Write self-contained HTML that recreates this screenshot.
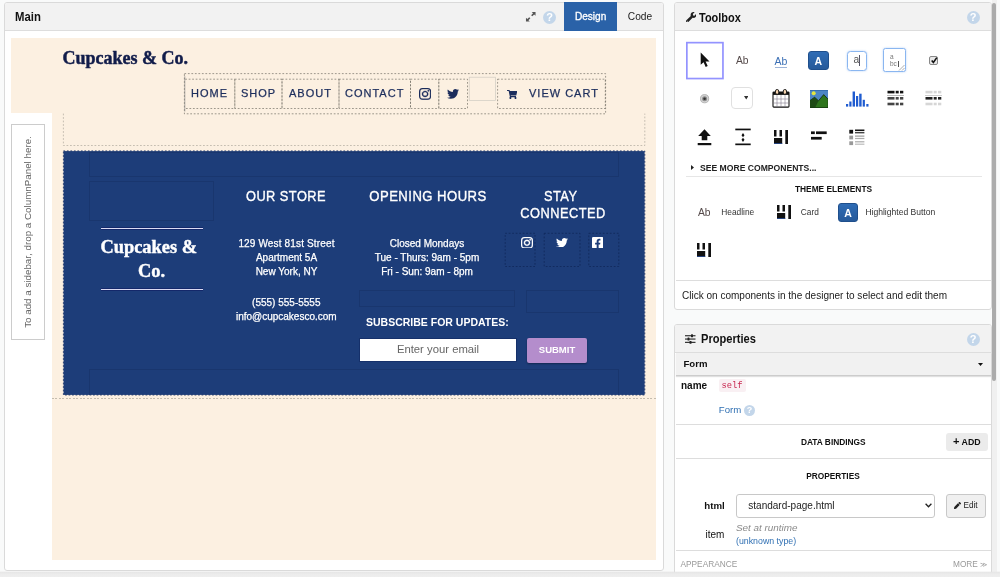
<!DOCTYPE html>
<html><head><meta charset="utf-8">
<style>
*{box-sizing:border-box;margin:0;padding:0}
html,body{width:1000px;height:577px;overflow:hidden}
body{background:#f9fafa;font-family:"Liberation Sans",sans-serif;color:#222;position:relative;font-size:10px}
.abs{position:absolute}
.panel{position:absolute;background:#fff;border:1px solid #dadada;border-radius:3px;overflow:hidden}
.phead{position:absolute;left:0;top:0;right:0;height:28px;background:#f2f2f2;border-bottom:1px solid #ddd}
.ptitle{position:absolute;transform-origin:0 50%;font-weight:bold;font-size:12px;color:#111;line-height:14px;white-space:nowrap}
.help{position:absolute;width:13px;height:13px;border-radius:50%;background:#c3d6ea;color:#fff;font-weight:bold;font-size:11px;line-height:13px;text-align:center}
.t{position:absolute;white-space:nowrap;line-height:1}
.dash{position:absolute;border:1px dashed #8a8378}
.ibox{position:absolute;border:1px solid #19366e}
.w{color:#fff}
.ctr{text-align:center}

.nt{top:86.4px;font-size:11px;color:#1c2d5c;letter-spacing:1px;line-height:14px;-webkit-text-stroke:0.25px #1c2d5c}
.hd{font-size:14px;letter-spacing:0.5px;transform:translateX(-50%) scaleX(.915);line-height:17.5px;top:187.8px !important;-webkit-text-stroke:0.35px #fff}
.bd{font-size:10px;line-height:14px;transform:translateX(-50%);-webkit-text-stroke:0.25px #fff}

.btnA{background:linear-gradient(#2f6cb5,#265a9a);border:1px solid #1f4f8c;border-radius:3px;color:#fff;font-weight:bold;font-size:10.5px;text-align:center;line-height:18.5px}
</style></head><body><div id="wrap" style="position:absolute;left:0;top:0;width:1000px;height:577px;will-change:transform;overflow:hidden">

<!-- MAIN PANEL -->
<div class="panel" id="main" style="left:4px;top:2px;width:660px;height:569px">
  <div class="phead"></div>
  <div class="ptitle" style="left:9.6px;top:7.3px;transform:scaleX(.945)">Main</div>
</div>


<!-- MAIN header controls -->
<svg class="abs" style="left:525.3px;top:11.2px" width="11.5" height="11.5" viewBox="0 0 12 12"><g fill="#555"><path d="M7 1h4v4l-1.4-1.4-2 2-1.2-1.2 2-2z"/><path d="M5 11H1V7l1.4 1.4 2-2 1.2 1.2-2 2z"/></g></svg>
<div class="help" style="left:543.1px;top:10.6px">?</div>
<div class="abs" style="left:564px;top:2px;width:53.2px;height:29px;background:#2a62a8;color:#fff;font-size:10.1px;font-weight:normal;text-align:center;line-height:30px;-webkit-text-stroke:0.3px #fff">Design</div>
<div class="abs" style="left:617.5px;top:3px;width:45px;height:27px;color:#222;font-size:10.2px;text-align:center;line-height:28px">Code</div>

<!-- design surface -->
<div class="abs" style="left:11px;top:38px;width:645px;height:75px;background:#fcf0e1"></div>
<div class="abs" style="left:52px;top:113px;width:604px;height:447px;background:#fcf0e1"></div>
<div class="abs" style="left:11px;top:124px;width:34px;height:216px;border:1px solid #ccc;background:#fff"></div>
<div class="t" id="sidetxt" style="left:28px;top:232px;font-size:9.8px;color:#666;transform:translate(-50%,-50%) rotate(-90deg)">To add a sidebar, drop a ColumnPanel here.</div>

<div class="t" id="title1" style="left:62.5px;top:48px;font-family:'Liberation Serif',serif;font-weight:bold;font-size:18px;color:#111c4a;line-height:20px;-webkit-text-stroke:0.45px #111c4a">Cupcakes &amp; Co.</div>

<!-- nav -->
<svg class="abs" style="left:180px;top:70px" width="430" height="48" viewBox="0 0 430 48"><g fill="none" stroke="#6b675f" stroke-width="0.65" stroke-dasharray="1.75 1.75"><rect x="4.40" y="3.60" width="421.20" height="40.20" /><path d="M5.2 9.2H54.80V38.50H5.2"/><rect x="54.80" y="9.20" width="47.20" height="29.30" /><rect x="102.00" y="9.20" width="57.00" height="29.30" /><rect x="159.00" y="9.20" width="71.50" height="29.30" /><rect x="230.50" y="9.20" width="28.30" height="29.30" /><rect x="258.80" y="9.20" width="28.70" height="29.30" /><rect x="317.60" y="9.20" width="107.70" height="29.30" /></g><path d="M4.80 6.20V41.50" stroke="#777" stroke-width="0.6" fill="none"/><rect x="289.20" y="7.20" width="26.3" height="23.4" fill="none" stroke="#cfcac2" stroke-width="0.7"/></svg>
<div class="t nt" id="n1" style="left:191px">HOME</div>
<div class="t nt" id="n2" style="left:241px">SHOP</div>
<div class="t nt" id="n3" style="left:289px">ABOUT</div>
<div class="t nt" id="n4" style="left:345px">CONTACT</div>
<div class="t nt" id="n5" style="left:529px">VIEW CART</div>

<!-- dashed slot -->
<svg class="abs" style="left:60px;top:110px" width="590" height="292" viewBox="0 0 590 292">
<path d="M3.4 3.6V35.5H584.8V3.6" fill="none" stroke="#a8a297" stroke-width="0.65" stroke-dasharray="1.75 1.75"/>
<rect x="3.6" y="41.1" width="581" height="243.8" fill="#1d3d79"/>
<rect x="3.4" y="40.9" width="581.4" height="244.1" fill="none" stroke="#0d2660" stroke-width="0.8" stroke-dasharray="1.75 1.75"/>
</svg>
<div class="abs" style="left:52px;top:398px;width:604px;height:1px;background:repeating-linear-gradient(90deg,#c4bcae 0,#c4bcae 1.75px,transparent 1.75px,transparent 3.5px)"></div>
<div class="ibox" style="left:89px;top:152px;width:530px;height:25px"></div>
<div class="ibox" style="left:89px;top:181px;width:125px;height:40px"></div>
<div class="ibox" style="left:89px;top:369px;width:530px;height:26px;border-bottom:none"></div>
<div class="ibox" style="left:359px;top:290px;width:156px;height:17px"></div>
<div class="ibox" style="left:526px;top:290px;width:93px;height:23px"></div>

<div class="abs" style="left:100.7px;top:227.4px;width:102px;height:3px;background:linear-gradient(#14286a 0,#14286a 0.5px,#dadaf2 0.6px,#dadaf2 2.4px,#14286a 2.5px,#14286a 3px)"></div>
<div class="abs" style="left:100.7px;top:287.5px;width:102px;height:3px;background:linear-gradient(#14286a 0,#14286a 0.5px,#dadaf2 0.6px,#dadaf2 2.4px,#14286a 2.5px,#14286a 3px)"></div>
<div class="t w ctr" id="title2" style="left:89px;width:125px;top:235px;font-family:'Liberation Serif',serif;font-weight:bold;font-size:18.4px;line-height:24px;white-space:normal;-webkit-text-stroke:0.4px #fff"><span style="position:relative;left:-2.8px">Cupcakes &amp;</span><br>Co.</div>

<div class="t w hd" id="h1" style="left:286.2px">OUR STORE</div>
<div class="t w hd" id="h2" style="left:428.2px;transform:translateX(-50%) scaleX(.936)">OPENING HOURS</div>
<div class="t w hd ctr" id="h3" style="left:563px"><span style="position:relative;left:-2.5px">STAY</span><br>CONNECTED</div>

<div class="t w bd ctr" id="b1" style="left:286.5px;top:236.9px"><span style="letter-spacing:0.15px">129 West 81st Street</span><br>Apartment 5A<br>New York, NY</div>
<div class="t w bd ctr" id="b2" style="left:286.3px;top:295.8px">(555) 555-5555<br>info@cupcakesco.com</div>
<div class="t w bd ctr" id="b3" style="left:427px;top:237.1px">Closed Mondays<br>Tue - Thurs: 9am - 5pm<br>Fri - Sun: 9am - 8pm</div>

<svg class="abs" style="left:500px;top:230px" width="125" height="40" viewBox="0 0 125 40"><g fill="none" stroke="#0e2454" stroke-width="0.7" stroke-dasharray="1.75 1.75"><rect x="5.2" y="3.3" width="29.8" height="33.2"/><rect x="44.2" y="3.3" width="35.8" height="33.2"/><rect x="88.8" y="3.3" width="30" height="33.2"/></g></svg>

<div class="t w" id="sub" style="left:366px;top:317px;font-size:10.5px;font-weight:bold;letter-spacing:0px">SUBSCRIBE FOR UPDATES:</div>
<div class="abs" style="left:359px;top:338px;width:158px;height:24px;background:#fff;border:1px solid #15306a"></div>
<div class="t" id="ph" style="left:438px;top:344px;font-size:11.3px;color:#666;transform:translateX(-50%)">Enter your email</div>
<div class="abs" style="left:527px;top:338px;width:60px;height:25px;background:#b48dcc;border-radius:2px;box-shadow:0 1px 2px rgba(0,0,0,.35)"></div>
<div class="t w" id="sbm" style="left:557px;top:345px;font-size:9.5px;font-weight:bold;transform:translateX(-50%)">SUBMIT</div>

<svg class="abs" style="left:418.7px;top:88.3px" width="12.2" height="11.8" viewBox="0 31 448 449" preserveAspectRatio="none"><path stroke="#1c2d5c" stroke-width="12" fill="#1c2d5c" d="M224.1 141c-63.6 0-114.9 51.3-114.9 114.9s51.3 114.9 114.9 114.9S339 319.5 339 255.9 287.7 141 224.1 141zm0 189.6c-41.1 0-74.7-33.5-74.7-74.7s33.5-74.7 74.7-74.7 74.7 33.5 74.7 74.7-33.6 74.7-74.7 74.7zm146.4-194.3c0 14.9-12 26.8-26.8 26.8-14.9 0-26.8-12-26.8-26.8s12-26.8 26.8-26.8 26.8 12 26.8 26.8zm76.1 27.2c-1.7-35.9-9.9-67.7-36.2-93.9-26.2-26.2-58-34.4-93.9-36.2-37-2.1-147.9-2.1-184.9 0-35.8 1.7-67.6 9.9-93.9 36.1s-34.4 58-36.2 93.9c-2.1 37-2.1 147.9 0 184.9 1.7 35.9 9.9 67.7 36.2 93.9s58 34.4 93.9 36.2c37 2.1 147.9 2.1 184.9 0 35.9-1.7 67.7-9.9 93.9-36.2 26.2-26.2 34.4-58 36.2-93.9 2.1-37 2.1-147.8 0-184.8zM398.8 388c-7.8 19.6-22.9 34.7-42.6 42.6-29.5 11.7-99.5 9-132.1 9s-102.7 2.6-132.1-9c-19.6-7.8-34.7-22.9-42.6-42.6-11.7-29.5-9-99.5-9-132.1s-2.6-102.7 9-132.1c7.8-19.6 22.9-34.7 42.6-42.6 29.5-11.7 99.5-9 132.1-9s102.7-2.6 132.1 9c19.6 7.8 34.7 22.9 42.6 42.6 11.7 29.5 9 99.5 9 132.1s2.7 102.7-9 132.1z"/></svg>
<svg class="abs" style="left:447px;top:89px" width="12" height="9.8" viewBox="0 48 512 416" preserveAspectRatio="none"><path fill="#1c2d5c" d="M459.37 151.716c.325 4.548.325 9.097.325 13.645 0 138.72-105.583 298.558-298.558 298.558-59.452 0-114.68-17.219-161.137-47.106 8.447.974 16.568 1.299 25.34 1.299 49.055 0 94.213-16.568 130.274-44.832-46.132-.975-84.792-31.188-98.112-72.772 6.498.974 12.995 1.624 19.818 1.624 9.421 0 18.843-1.3 27.614-3.573-48.081-9.747-84.143-51.98-84.143-102.985v-1.299c13.969 7.797 30.214 12.67 47.431 13.319-28.264-18.843-46.781-51.005-46.781-87.391 0-19.492 5.197-37.36 14.294-52.954 51.655 63.675 129.3 105.258 216.365 109.807-1.624-7.797-2.599-15.918-2.599-24.04 0-57.828 46.782-104.934 104.934-104.934 30.213 0 57.502 12.67 76.67 33.137 23.715-4.548 46.456-13.32 66.599-25.34-7.798 24.366-24.366 44.833-46.132 57.827 21.117-2.273 41.584-8.122 60.426-16.243-14.292 20.791-32.161 39.308-52.628 54.253z"/></svg>
<svg class="abs" style="left:506.7px;top:90px" width="10.2" height="8.9" viewBox="0 0 576 512" preserveAspectRatio="none"><path fill="#1c2d5c" d="M528.12 301.319l47.273-208C578.806 78.301 567.391 64 551.99 64H159.208l-9.166-44.81C147.758 8.021 137.93 0 126.529 0H24C10.745 0 0 10.745 0 24v16c0 13.255 10.745 24 24 24h69.883l70.248 343.435C147.325 417.1 136 435.222 136 456c0 30.928 25.072 56 56 56s56-25.072 56-56c0-15.674-6.447-29.835-16.824-40h209.647C430.447 426.165 424 440.326 424 456c0 30.928 25.072 56 56 56s56-25.072 56-56c0-22.172-12.888-41.332-31.579-50.405l5.517-24.276c3.413-15.018-8.002-29.319-23.403-29.319H218.117l-6.545-32h293.145c11.206 0 20.92-7.754 23.403-18.681z"/></svg>
<svg class="abs" style="left:521.4px;top:236.8px" width="12" height="11.6" viewBox="0 31 448 449" preserveAspectRatio="none"><path stroke="#fff" stroke-width="14" fill="#fff" d="M224.1 141c-63.6 0-114.9 51.3-114.9 114.9s51.3 114.9 114.9 114.9S339 319.5 339 255.9 287.7 141 224.1 141zm0 189.6c-41.1 0-74.7-33.5-74.7-74.7s33.5-74.7 74.7-74.7 74.7 33.5 74.7 74.7-33.6 74.7-74.7 74.7zm146.4-194.3c0 14.9-12 26.8-26.8 26.8-14.9 0-26.8-12-26.8-26.8s12-26.8 26.8-26.8 26.8 12 26.8 26.8zm76.1 27.2c-1.7-35.9-9.9-67.7-36.2-93.9-26.2-26.2-58-34.4-93.9-36.2-37-2.1-147.9-2.1-184.9 0-35.8 1.7-67.6 9.9-93.9 36.1s-34.4 58-36.2 93.9c-2.1 37-2.1 147.9 0 184.9 1.7 35.9 9.9 67.7 36.2 93.9s58 34.4 93.9 36.2c37 2.1 147.9 2.1 184.9 0 35.9-1.7 67.7-9.9 93.9-36.2 26.2-26.2 34.4-58 36.2-93.9 2.1-37 2.1-147.8 0-184.8zM398.8 388c-7.8 19.6-22.9 34.7-42.6 42.6-29.5 11.7-99.5 9-132.1 9s-102.7 2.6-132.1-9c-19.6-7.8-34.7-22.9-42.6-42.6-11.7-29.5-9-99.5-9-132.1s-2.6-102.7 9-132.1c7.8-19.6 22.9-34.7 42.6-42.6 29.5-11.7 99.5-9 132.1-9s102.7-2.6 132.1 9c19.6 7.8 34.7 22.9 42.6 42.6 11.7 29.5 9 99.5 9 132.1s2.7 102.7-9 132.1z"/></svg>
<svg class="abs" style="left:556px;top:237.6px" width="12" height="9.8" viewBox="0 48 512 416" preserveAspectRatio="none"><path fill="#fff" d="M459.37 151.716c.325 4.548.325 9.097.325 13.645 0 138.72-105.583 298.558-298.558 298.558-59.452 0-114.68-17.219-161.137-47.106 8.447.974 16.568 1.299 25.34 1.299 49.055 0 94.213-16.568 130.274-44.832-46.132-.975-84.792-31.188-98.112-72.772 6.498.974 12.995 1.624 19.818 1.624 9.421 0 18.843-1.3 27.614-3.573-48.081-9.747-84.143-51.98-84.143-102.985v-1.299c13.969 7.797 30.214 12.67 47.431 13.319-28.264-18.843-46.781-51.005-46.781-87.391 0-19.492 5.197-37.36 14.294-52.954 51.655 63.675 129.3 105.258 216.365 109.807-1.624-7.797-2.599-15.918-2.599-24.04 0-57.828 46.782-104.934 104.934-104.934 30.213 0 57.502 12.67 76.67 33.137 23.715-4.548 46.456-13.32 66.599-25.34-7.798 24.366-24.366 44.833-46.132 57.827 21.117-2.273 41.584-8.122 60.426-16.243-14.292 20.791-32.161 39.308-52.628 54.253z"/></svg>
<svg class="abs" style="left:591.7px;top:237px" width="11.3" height="11.3" viewBox="0 32 448 448" preserveAspectRatio="none"><path fill="#fff" d="M400 32H48A48 48 0 0 0 0 80v352a48 48 0 0 0 48 48h137.25V327.69h-63V256h63v-54.64c0-62.15 37-96.48 93.67-96.48 27.14 0 55.52 4.84 55.52 4.84v61h-31.27c-30.81 0-40.42 19.12-40.42 38.73V256h68.78l-11 71.69h-57.78V480H400a48 48 0 0 0 48-48V80a48 48 0 0 0-48-48z"/></svg>
<!-- RIGHT: TOOLBOX -->
<div class="panel" id="toolbox" style="left:674.4px;top:2px;width:317.4px;height:308px">
  <div class="phead"></div>
  <div class="ptitle" style="left:23.5px;top:7.5px;transform:scaleX(.913)">Toolbox</div>
</div>


<svg class="abs" style="left:685.5px;top:11.5px" width="10.5" height="10.5" viewBox="0 0 512 512"><path fill="#222" d="M507.73 109.1c-2.24-9.03-13.54-12.09-20.12-5.51l-74.36 74.36-67.88-11.31-11.31-67.88 74.36-74.36c6.62-6.62 3.43-17.9-5.66-20.16-47.38-11.74-99.55.91-136.58 37.93-39.64 39.64-50.55 97.1-34.05 147.2L18.74 402.76c-24.99 24.99-24.99 65.51 0 90.5 24.99 24.99 65.51 24.99 90.5 0l213.21-213.21c50.12 16.71 107.47 5.68 147.37-34.22 37.07-37.07 49.7-89.32 37.91-136.73zM64 472c-13.25 0-24-10.75-24-24 0-13.26 10.75-24 24-24s24 10.74 24 24c0 13.25-10.75 24-24 24z"/></svg>
<div class="help" style="left:966.5px;top:10.5px">?</div>

<!-- row 1 -->
<svg class="abs" style="left:685px;top:41px" width="40" height="40" viewBox="0 0 40 40"><rect x="1.85" y="1.65" width="36.1" height="35.9" fill="#fff" stroke="#9393ff" stroke-width="1.7"/></svg>
<svg class="abs" style="left:700px;top:52px" width="11" height="16" viewBox="0 0 11 16"><path fill="#111" d="M0.7 0.5 L0.7 12.8 L3.6 10.2 L5.7 15 L7.7 14.1 L5.6 9.4 L9.5 9.4 Z"/></svg>
<div class="t" style="left:736px;top:55.5px;font-size:10.3px;color:#554a4a">Ab</div>
<div class="t" style="left:774.5px;top:55.5px;font-size:10.5px;color:#3b6fb5;border-bottom:1px solid #9db4d8;padding-bottom:0.5px">Ab</div>
<div class="abs btnA" style="left:808px;top:50.5px;width:20.5px;height:19.5px">A</div>
<div class="abs" style="left:847px;top:50.5px;width:19.5px;height:20px;border:1px solid #8ab6f0;border-radius:3.5px;background:#fff;box-shadow:0 0 2px rgba(120,170,240,.6)"></div>
<div class="t" style="left:853.5px;top:54.6px;font-size:10.2px;color:#555">a</div>
<div class="abs" style="left:859.2px;top:54.6px;width:0.9px;height:11px;background:#556"></div>
<div class="abs" style="left:883.3px;top:48px;width:22.7px;height:24px;border:1px solid #8ab6f0;border-radius:2.5px;background:#fff;box-shadow:0 0 2px rgba(120,170,240,.6)"></div>
<div class="t" style="left:890px;top:52.5px;font-size:6.5px;color:#777;line-height:7.5px;white-space:pre">a
bc</div>
<div class="abs" style="left:897.5px;top:61px;width:1px;height:6px;background:#555"></div>
<svg class="abs" style="left:898px;top:64px" width="7" height="7" viewBox="0 0 7 7"><path d="M6.5 1 L1 6.5 M6.5 4 L4 6.5" stroke="#999" stroke-width="0.8" fill="none"/></svg>
<div class="abs" style="left:929px;top:55.5px;width:8.5px;height:9px;border:1px solid #888;border-radius:2px;background:#e8e8e8"></div>
<svg class="abs" style="left:929.5px;top:54.5px" width="9" height="10" viewBox="0 0 9 10"><path d="M1.7 5.4 L3.4 7.4 L6.8 2.6" stroke="#111" stroke-width="1.6" fill="none"/></svg>

<!-- row 2 -->
<svg class="abs" style="left:699px;top:93px" width="12" height="12" viewBox="0 0 12 12"><circle cx="5.6" cy="5.7" r="4.1" fill="#d4d4d4" stroke="#a8a8a8" stroke-width="0.8"/><circle cx="5.6" cy="5.7" r="2.5" fill="#8c8c8c"/><circle cx="5.6" cy="5.7" r="1.3" fill="#333"/></svg>
<div class="abs" style="left:731.2px;top:86.6px;width:21.6px;height:22.6px;border:1px solid #e0e0e0;border-radius:4px;background:#fff"></div>
<svg class="abs" style="left:743.9px;top:96.2px" width="4.5" height="3.6" viewBox="0 0 5 4"><path d="M0 0H5L2.5 4z" fill="#333"/></svg>
<!-- calendar -->
<svg class="abs" style="left:771.5px;top:88.5px" width="18" height="19" viewBox="0 0 18 19">
<rect x="1" y="3" width="16" height="15.1" rx="0.8" fill="#fff" stroke="#111" stroke-width="1.1"/>
<rect x="1" y="3" width="16" height="2.9" fill="#111"/>
<path d="M1.3 10H16.7M1.3 14H16.7M5 6V18M9 6V18M13 6V18" stroke="#7a7486" stroke-width="0.55" fill="none"/>
<rect x="3.5" y="0.5" width="3.2" height="4.8" rx="1.5" fill="#f4d2ae" stroke="#111" stroke-width="0.9"/>
<rect x="11.3" y="0.5" width="3.2" height="4.8" rx="1.5" fill="#f4d2ae" stroke="#111" stroke-width="0.9"/>
</svg>
<!-- image -->
<svg class="abs" style="left:809.7px;top:89.7px" width="18.2" height="18.2" viewBox="0 0 18.200 18.2">
<rect width="18.2" height="18.2" fill="#4d86c4"/>
<rect width="18.2" height="0.7" fill="#2d66a8"/>
<circle cx="3.7" cy="3.3" r="2" fill="#e4e640"/>
<path d="M0 18.2V10.5L4.600 7.3L8.500 10.8L13.700 4.6L18.200 9.3V18.2z" fill="#2e741c" stroke="#0c1a08" stroke-width="0.7"/>
<path d="M0 18.2V10.5L4.600 7.3L8.500 10.8L5 18.2z" fill="#1e4a14"/>
<rect y="17.3" width="18.2" height="0.9" fill="#163a10"/>
</svg>
<!-- plot -->
<svg class="abs" style="left:845.5px;top:90.5px" width="23" height="16" viewBox="0 0 23 16"><g fill="#1f5bd0">
<rect x="0" y="13" width="2.2" height="2.6"/><rect x="3.3" y="10.5" width="2.2" height="5.1"/><rect x="6.6" y="0.5" width="2.4" height="15.1"/><rect x="10" y="5" width="2.2" height="10.6"/><rect x="13.2" y="2.7" width="2.4" height="12.9"/><rect x="16.7" y="8.8" width="2.2" height="6.8"/><rect x="20.3" y="13" width="2.2" height="2.6"/></g></svg>
<!-- datagrid -->
<svg class="abs" style="left:886.5px;top:90.1px" width="17" height="16" viewBox="0 0 17 16">
<g fill="#111"><rect x="0.5" y="0.8" width="7" height="2.6"/><rect x="8.7" y="0.8" width="3" height="2.6"/><rect x="13" y="0.8" width="3.3" height="2.6"/></g>
<rect x="0" y="5" width="17" height="0.6" fill="#888"/>
<g fill="#444"><rect x="0.5" y="7" width="7" height="2.6"/><rect x="8.7" y="7" width="3" height="2.6"/><rect x="13" y="7" width="3.3" height="2.6"/>
<rect x="0.5" y="12.7" width="7" height="2.6"/><rect x="8.7" y="12.7" width="3" height="2.6"/><rect x="13" y="12.7" width="3.3" height="2.6"/></g></svg>
<!-- repeating -->
<svg class="abs" style="left:925px;top:90.1px" width="17" height="16" viewBox="0 0 17 16">
<g fill="#d6d6d6"><rect x="0.5" y="0.8" width="7" height="2.6"/><rect x="8.7" y="0.8" width="3" height="2.6"/><rect x="13" y="0.8" width="3.3" height="2.6"/>
<rect x="0.5" y="12.7" width="7" height="2.6"/><rect x="8.7" y="12.7" width="3" height="2.6"/><rect x="13" y="12.7" width="3.3" height="2.6"/></g>
<rect x="0" y="5" width="17" height="0.6" fill="#aaa"/>
<g fill="#222"><rect x="0.5" y="7" width="7" height="2.6"/><rect x="8.7" y="7" width="3" height="2.6"/><rect x="13" y="7" width="3.3" height="2.6"/></g></svg>

<!-- row 3 -->
<svg class="abs" style="left:697px;top:128.5px" width="15" height="17" viewBox="0 0 15 17"><path d="M7.5 0.3L13.8 7H10.3V11.2H4.7V7H1.2z" fill="#111"/><rect x="0.7" y="14" width="13.6" height="2.2" fill="#111"/></svg>
<svg class="abs" style="left:734.5px;top:127.5px" width="16" height="18" viewBox="0 0 16 18"><rect x="0.3" y="0.6" width="15.4" height="1.7" fill="#111"/><rect x="0.3" y="15.5" width="15.4" height="1.7" fill="#111"/><path d="M8 5L9.5 7.3L8 9.2L6.5 7.3zM8 9.8L9.5 11.7L8 14L6.5 11.7z" fill="#111"/></svg>
<svg class="abs cardic" style="left:773.5px;top:130px" width="14.5" height="14" viewBox="0 0 14.5 14"><g fill="#111"><rect x="0" y="0" width="2.5" height="6.5"/><rect x="5.5" y="0" width="2.5" height="6.5"/><rect x="0" y="8" width="8.2" height="6"/><rect x="11.3" y="0" width="2.7" height="14"/></g><rect x="0" y="13.2" width="8.2" height="0.8" fill="#2a4f9a"/></svg>
<svg class="abs" style="left:811px;top:131px" width="16" height="9.5" viewBox="0 0 16 9.5"><g fill="#111"><rect x="0" y="0.4" width="3.8" height="2.7"/><rect x="5" y="0.4" width="10.7" height="2.7"/><rect x="0" y="5.9" width="10.7" height="2.7"/></g></svg>
<svg class="abs" style="left:848.5px;top:128.5px" width="16" height="17" viewBox="0 0 16 17">
<rect x="0.3" y="0.8" width="3.8" height="3.8" fill="#111"/><rect x="6" y="0.5" width="9.4" height="1.5" fill="#111"/><rect x="6" y="2.9" width="9.4" height="1.5" fill="#444"/>
<rect x="0.3" y="6.6" width="3.8" height="3.8" fill="#999"/><rect x="6" y="6.5" width="9.4" height="1.2" fill="#999"/><rect x="6" y="8.9" width="9.4" height="1.2" fill="#aaa"/>
<rect x="0.3" y="12.3" width="3.8" height="3.8" fill="#999"/><rect x="6" y="12.2" width="9.4" height="1.2" fill="#aaa"/><rect x="6" y="14.6" width="9.4" height="1.2" fill="#bbb"/></svg>

<svg class="abs" style="left:690.5px;top:165px" width="3" height="5" viewBox="0 0 3 5"><path d="M0 0L3 2.5L0 5z" fill="#222"/></svg>
<div class="t" id="seemore" style="left:700px;top:163px;font-size:8.6px;font-weight:bold;color:#222;line-height:10px">SEE MORE COMPONENTS...</div>
<div class="abs" style="left:686px;top:176px;width:296px;height:1px;background:#e6e6e6"></div>
<div class="t" id="theme" style="left:833.5px;top:183.5px;font-size:8.4px;font-weight:bold;color:#111;transform:translateX(-50%);line-height:10px">THEME ELEMENTS</div>

<div class="t" style="left:698px;top:207px;font-size:10.3px;color:#554a4a;line-height:12px">Ab</div>
<div class="t" id="hl" style="left:721.3px;top:206.9px;font-size:8.35px;color:#333;line-height:11px">Headline</div>
<svg class="abs cardic" style="left:776.5px;top:205.3px" width="14.5" height="14" viewBox="0 0 14.5 14"><g fill="#111"><rect x="0" y="0" width="2.5" height="6.5"/><rect x="5.5" y="0" width="2.5" height="6.5"/><rect x="0" y="8" width="8.2" height="6"/><rect x="11.3" y="0" width="2.7" height="14"/></g><rect x="0" y="13.2" width="8.2" height="0.8" fill="#2a4f9a"/></svg>
<div class="t" id="cardt" style="left:800.8px;top:206.9px;font-size:8.3px;color:#333;line-height:11px">Card</div>
<div class="abs btnA" style="left:838px;top:202.5px;width:20px;height:19.5px">A</div>
<div class="t" id="hb" style="left:865.4px;top:206.9px;font-size:8.55px;color:#333;line-height:11px">Highlighted Button</div>
<svg class="abs cardic" style="left:697.3px;top:243px" width="14.5" height="14" viewBox="0 0 14.5 14"><g fill="#111"><rect x="0" y="0" width="2.5" height="6.5"/><rect x="5.5" y="0" width="2.5" height="6.5"/><rect x="0" y="8" width="8.2" height="6"/><rect x="11.3" y="0" width="2.7" height="14"/></g><rect x="0" y="13.2" width="8.2" height="0.8" fill="#2a4f9a"/></svg>

<div class="abs" style="left:676px;top:280px;width:315px;height:1px;background:#ddd"></div>
<div class="t" id="hint" style="left:682px;top:289.5px;font-size:10.03px;color:#222;line-height:12px">Click on components in the designer to select and edit them</div>
<!-- scrollbar -->
<div class="abs" style="left:991.8px;top:0;width:5.2px;height:572px;background:#f0f0f0"></div>
<div class="abs" style="left:992.2px;top:2.5px;width:3.6px;height:378.5px;background:#ababab;border-radius:2px"></div>

<!-- RIGHT: PROPERTIES -->
<div class="panel" id="props" style="left:674.4px;top:324px;width:317.4px;height:260px;border-bottom-left-radius:0;border-bottom-right-radius:0">
  <div class="phead"></div>
  <div class="ptitle" style="left:26px;top:6.8px;transform:scaleX(.925)">Properties</div>
</div>


<!-- properties -->
<svg class="abs" style="left:685px;top:334px" width="10.5" height="10" viewBox="0 0 10.5 10"><g fill="#222"><rect x="0" y="1.2" width="10.5" height="1.1"/><rect x="0" y="4.5" width="10.5" height="1.1"/><rect x="0" y="7.8" width="10.5" height="1.1"/><rect x="6" y="0.3" width="2" height="2.9" rx="0.5"/><rect x="2.5" y="3.6" width="2" height="2.9" rx="0.5"/><rect x="4.5" y="6.9" width="2" height="2.9" rx="0.5"/></g></svg>
<div class="help" style="left:966.5px;top:332.5px">?</div>
<div class="abs" style="left:676px;top:353px;width:315px;height:23px;background:#f1f1f1;border-bottom:1px solid #ccc;box-shadow:0 1px 1px rgba(0,0,0,.12)"></div>
<div class="t" id="formh" style="left:683.5px;top:357.5px;font-size:9.6px;font-weight:bold;color:#111;line-height:12px">Form</div>
<svg class="abs" style="left:978px;top:362.5px" width="5" height="3" viewBox="0 0 5 3"><path d="M0 0H5L2.5 3z" fill="#111"/></svg>
<div class="t" id="namel" style="left:681px;top:379.6px;font-size:10px;font-weight:bold;color:#111;line-height:12px">name</div>
<div class="abs" style="left:719px;top:379px;width:26.5px;height:13px;background:#f9f0f3;border-radius:2px"></div>
<div class="t" id="selft" style="left:721.5px;top:380.5px;font-family:'Liberation Mono',monospace;font-size:8.8px;color:#c7254e;line-height:11px">self</div>
<div class="t" id="forml" style="left:718.8px;top:403.9px;font-size:9.6px;color:#3070b3;line-height:12px">Form</div>
<div class="help" style="left:744px;top:405px;width:11px;height:11px;font-size:9px;line-height:11px">?</div>
<div class="abs" style="left:676px;top:424px;width:315px;height:1px;background:#ddd"></div>
<div class="t" id="databind" style="left:833.3px;top:436.8px;font-size:8.35px;font-weight:bold;color:#111;transform:translateX(-50%);line-height:10px">DATA BINDINGS</div>
<div class="abs" style="left:946px;top:433px;width:41.5px;height:18px;background:#ebebeb;border-radius:3px"></div>
<div class="t" id="addt" style="left:953px;top:437.0px;font-size:8.8px;font-weight:bold;color:#111;line-height:10px"><span style="font-size:11px;line-height:0">+</span> ADD</div>
<div class="abs" style="left:676px;top:458px;width:315px;height:1px;background:#ddd"></div>
<div class="t" id="propst" style="left:833px;top:470.5px;font-size:8.3px;font-weight:bold;color:#111;transform:translateX(-50%);line-height:10px">PROPERTIES</div>
<div class="t" id="htmll" style="left:704.3px;top:499.5px;font-size:9.7px;font-weight:bold;color:#111;line-height:12px">html</div>
<div class="abs" style="left:736px;top:494px;width:199px;height:24px;background:#fff;border:1px solid #c8c8c8;border-radius:3px"></div>
<div class="t" id="selt" style="left:748.3px;top:500px;font-size:10.03px;color:#222;line-height:12px">standard-page.html</div>
<svg class="abs" style="left:925px;top:503px" width="7" height="5" viewBox="0 0 7 5"><path d="M0.6 0.8L3.5 3.8L6.4 0.8" stroke="#222" stroke-width="1.3" fill="none"/></svg>
<div class="abs" style="left:946px;top:494px;width:40px;height:23.5px;background:#f0f0f0;border:1px solid #c8c8c8;border-radius:3px"></div>
<svg class="abs" style="left:953.5px;top:502px" width="7" height="7" viewBox="0 0 512 512"><path fill="#222" d="M497.9 142.1l-46.1 46.1c-4.7 4.7-12.3 4.7-17 0l-111-111c-4.7-4.7-4.7-12.3 0-17l46.1-46.1c18.7-18.7 49.1-18.7 67.9 0l60.1 60.1c18.8 18.7 18.8 49.1 0 67.9zM284.2 99.8L21.6 362.4.4 483.9c-2.9 16.4 11.4 30.6 27.8 27.8l121.5-21.3 262.6-262.6c4.7-4.7 4.7-12.3 0-17l-111-111c-4.8-4.7-12.4-4.7-17.1 0z"/></svg>
<div class="t" id="editt" style="left:963.5px;top:500.5px;font-size:8.2px;color:#222;line-height:10px">Edit</div>
<div class="t" id="iteml" style="left:705.5px;top:529.0px;font-size:10px;color:#111;line-height:12px">item</div>
<div class="t" id="setrt" style="left:736px;top:522px;font-size:9.9px;font-style:italic;color:#8a8a8a;line-height:11px">Set at runtime</div>
<div class="t" id="unkt" style="left:736px;top:536px;font-size:8.8px;color:#3070b3;line-height:11px">(unknown type)</div>
<div class="abs" style="left:676px;top:550px;width:315px;height:1px;background:#ddd"></div>
<div class="t" id="appt" style="left:680.5px;top:558.8px;font-size:8.3px;color:#999;line-height:10px">APPEARANCE</div>
<div class="t" id="moret" style="left:953px;top:558.8px;font-size:8.3px;color:#999;line-height:10px">MORE <span style="font-size:7px">&#8811;</span></div>
<!-- bottom band -->
<div class="abs" style="left:0;top:570.6px;width:1000px;height:7px;background:linear-gradient(rgba(228,228,228,0) 0,#e6e6e6 1.6px,#ececec 3px,#efefef 100%)"></div>

</div></body></html>
